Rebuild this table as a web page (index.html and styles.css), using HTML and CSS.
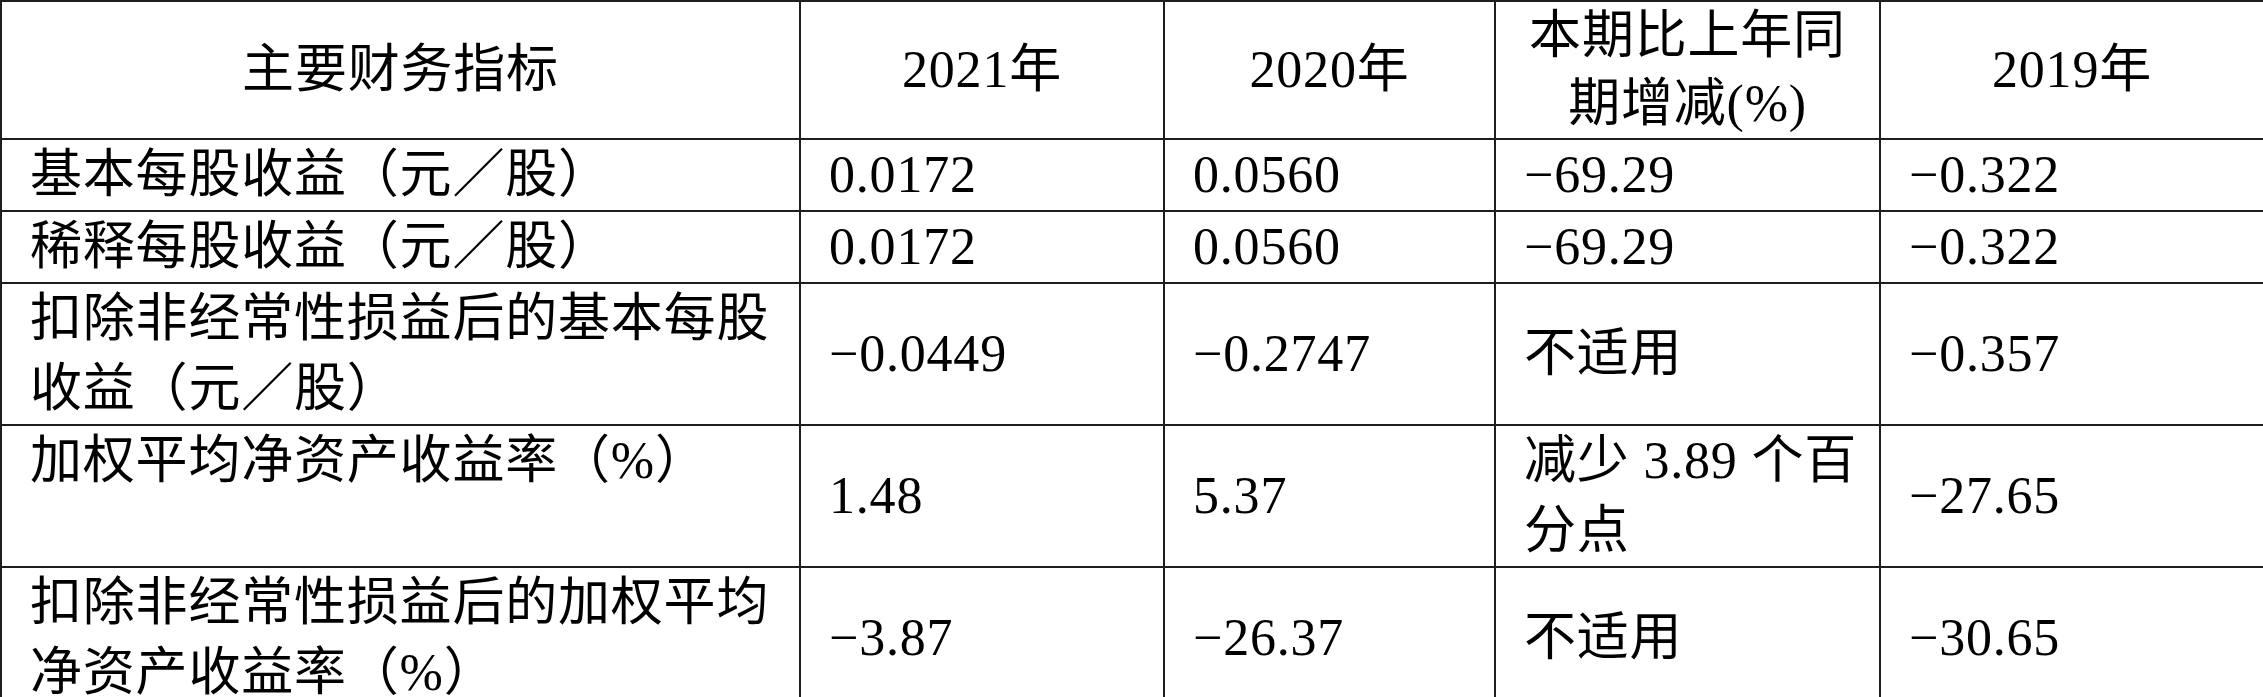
FILE: index.html
```html
<!DOCTYPE html>
<html>
<head>
  <title>主要财务指标</title>
  <meta charset="UTF-8">
  <link rel="stylesheet" href="styles.css">
</head>
<body>
  <table class="fin-table">
    <colgroup>
      <col class="col-name">
      <col class="col-2021">
      <col class="col-2020">
      <col class="col-change">
      <col class="col-2019">
    </colgroup>
    <!-- ШАПКА -->
    <tr class="row-head">
      <th>主要财务指标</th>
      <th>2021年</th>
      <th>2020年</th>
      <th>本期比上年同期增减(%)</th>
      <th>2019年</th>
    </tr>
    <!-- СТРОКИ -->
    <tr class="row-single">
      <td class="name">基本每股收益（元／股）</td>
      <td>0.0172</td>
      <td>0.0560</td>
      <td>−69.29</td>
      <td>−0.322</td>
    </tr>
    <tr class="row-single">
      <td class="name">稀释每股收益（元／股）</td>
      <td>0.0172</td>
      <td>0.0560</td>
      <td>−69.29</td>
      <td>−0.322</td>
    </tr>
    <tr class="row-double">
      <td class="name">扣除非经常性损益后的基本每股收益（元／股）</td>
      <td>−0.0449</td>
      <td>−0.2747</td>
      <td>不适用</td>
      <td>−0.357</td>
    </tr>
    <tr class="row-double">
      <td class="name">加权平均净资产收益率（%）</td>
      <td>1.48</td>
      <td>5.37</td>
      <td>减少 3.89 个百分点</td>
      <td>−27.65</td>
    </tr>
    <tr class="row-last">
      <td class="name">扣除非经常性损益后的加权平均净资产收益率（%）</td>
      <td>−3.87</td>
      <td>−26.37</td>
      <td>不适用</td>
      <td>−30.65</td>
    </tr>
  </table>
</body>
</html>
```

FILE: styles.css
```css
body {
  margin: 0;
  background: #fff;
  font-family: "Liberation Serif", "Noto Sans CJK SC", serif;
  color: #000;
}
.fin-table {
  width: 2263px;
  border-collapse: collapse;
  table-layout: fixed;
  font-size: 52px;
  letter-spacing: 0.8px;
}
.col-name { width: 799px; }
.col-2021 { width: 364px; }
.col-2020 { width: 331px; }
.col-change { width: 385px; }
.col-2019 { width: 384px; }

th, td { border: 2px solid #1e1e1e; padding: 0 12px 0 28px; line-height: 70px; }
th { font-weight: normal; text-align: center; vertical-align: middle; line-height: 68px; padding: 0 10px; }
td { text-align: left; vertical-align: middle; }
td.name { vertical-align: top; padding-right: 20px; }

.row-head { height: 138px; }
.row-single { height: 70px; }
.row-double { height: 139px; }
.row-last { height: 140px; }
```
